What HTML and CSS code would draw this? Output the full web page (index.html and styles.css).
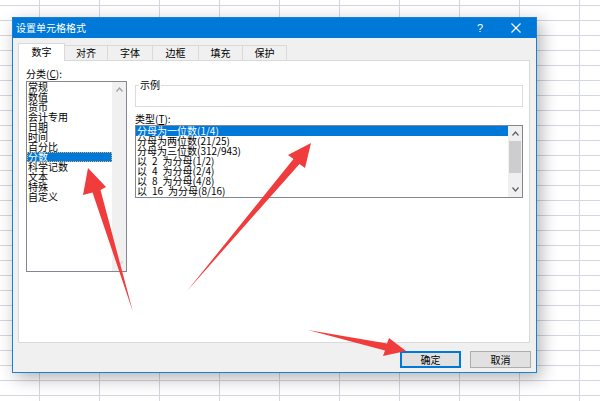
FILE: index.html
```html
<!DOCTYPE html>
<html lang="zh-CN">
<head>
<meta charset="utf-8">
<title>设置单元格格式</title>
<link rel="stylesheet" href="styles.css">
</head>
<body>
<div class="sheet">
  <div class="dialog">
    <div class="titlebar">
      <span class="title">设置单元格格式</span>
      <span class="help">?</span>
      <svg class="close" width="10" height="10" viewBox="0 0 10 10"><path d="M0.5 0.5L9.5 9.5M9.5 0.5L0.5 9.5" stroke="#fff" stroke-width="1.1" fill="none"/></svg>
    </div>
    <div class="body">
      <div class="tabs">
        <div class="tab active w1">数字</div>
        <div class="tab w2">对齐</div>
        <div class="tab w3">字体</div>
        <div class="tab w4">边框</div>
        <div class="tab w5">填充</div>
        <div class="tab w6">保护</div>
      </div>
      <div class="panel">
        <div class="col-left">
          <div class="label">分类(<u>C</u>):</div>
          <div class="listbox cat">
            <ul class="items">
              <li>常规</li>
              <li>数值</li>
              <li>货币</li>
              <li>会计专用</li>
              <li>日期</li>
              <li>时间</li>
              <li>百分比</li>
              <li class="sel focus">分数</li>
              <li>科学记数</li>
              <li>文本</li>
              <li>特殊</li>
              <li>自定义</li>
            </ul>
            <div class="vscroll">
              <div class="arrow-btn"><svg width="7" height="5" viewBox="0 0 7 5"><polyline points="0.5,4.5 3.5,1 6.5,4.5" fill="none" stroke="#a0a0a0" stroke-width="1.2"/></svg></div>
              <div class="track"></div>
              <div class="arrow-btn"><svg width="7" height="5" viewBox="0 0 7 5"><polyline points="0.5,0.5 3.5,4 6.5,0.5" fill="none" stroke="#cfcfcf" stroke-width="1.2"/></svg></div>
            </div>
          </div>
        </div>
        <div class="col-right">
          <fieldset class="sample">
            <legend>示例</legend>
            <div class="sample-body"></div>
          </fieldset>
          <div class="label type-label">类型(<u>T</u>):</div>
          <div class="listbox types">
            <ul class="items">
              <li class="sel">分母为一位数(1/4)</li>
              <li>分母为两位数(21/25)</li>
              <li>分母为三位数(312/943)</li>
              <li>以&ensp;2&ensp;为分母(1/2)</li>
              <li>以&ensp;4&ensp;为分母(2/4)</li>
              <li>以&ensp;8&ensp;为分母(4/8)</li>
              <li>以&ensp;16&ensp;为分母(8/16)</li>
            </ul>
            <div class="vscroll">
              <div class="arrow-btn"><svg width="7" height="5" viewBox="0 0 7 5"><polyline points="0.5,4.5 3.5,1 6.5,4.5" fill="none" stroke="#606060" stroke-width="1.2"/></svg></div>
              <div class="track"><div class="thumb"></div></div>
              <div class="arrow-btn"><svg width="7" height="5" viewBox="0 0 7 5"><polyline points="0.5,0.5 3.5,4 6.5,0.5" fill="none" stroke="#606060" stroke-width="1.2"/></svg></div>
            </div>
          </div>
        </div>
      </div>
      <div class="buttons">
        <button class="btn default">确定</button>
        <button class="btn">取消</button>
      </div>
    </div>
  </div>
  <svg class="arrows" width="600" height="401" viewBox="0 0 600 401">
    <polygon points="88,168 106,187 100.5,190 133,312 92.5,192.5 83,195" fill="#f03c3c"/>
    <polygon points="311,143 305,168 299.5,164 187,291 293.5,159 288,155" fill="#f03c3c"/>
    <polygon points="406,351 383,356 385,350.5 308,330 387,343.5 389,338" fill="#f03c3c"/>
  </svg>
</div>
</body>
</html>
```

FILE: styles.css
```css
html, body {
  margin: 0;
  padding: 0;
  background: #fff;
}

body {
  font-family: "Noto Sans CJK SC", "Noto Sans", sans-serif;
  color: #000;
}

.sheet {
  position: relative;
  width: 600px;
  height: 401px;
  overflow: hidden;
  background-color: #fff;
  background-image:
    linear-gradient(to right, #d3d6e0 1px, transparent 1px),
    linear-gradient(to bottom, #d3d6e0 1px, transparent 1px);
  background-size: 60px 15px;
  background-position: 39px 5px;
}

.dialog {
  position: absolute;
  left: 12px;
  top: 17px;
  width: 525px;
  height: 356px;
  box-sizing: border-box;
  border: 1px solid #1a80d6;
  background: #f0f0f0;
  display: flex;
  flex-direction: column;
  box-shadow: 4px 5px 16px rgba(0, 0, 0, 0.3);
}

.titlebar {
  height: 20px;
  flex: none;
  background: #0078d7;
  color: #fff;
  display: flex;
  align-items: center;
  padding: 0 15px 0 3px;
  font-size: 10px;
  line-height: 12px;
}

.help {
  margin-left: auto;
  width: 8px;
  text-align: center;
  font-family: "Liberation Sans", sans-serif;
  font-size: 11px;
}

.close {
  margin-left: 27px;
  display: block;
}

.body {
  flex: 1;
  display: flex;
  flex-direction: column;
  padding: 5px 6px 4px 5px;
}

.tabs {
  display: flex;
  align-items: flex-end;
  height: 17px;
  flex: none;
  position: relative;
  z-index: 1;
}

.tab {
  height: 15px;
  box-sizing: border-box;
  border: 1px solid #d9d9d9;
  border-bottom: none;
  margin-left: -1px;
  background: #f0f0f0;
  font-size: 10px;
  line-height: 14px;
  text-align: center;
}

.tab.w1 { width: 47px; margin-left: 0; }
.tab.w2 { width: 44px; }
.tab.w3 { width: 46px; }
.tab.w4 { width: 47px; }
.tab.w5 { width: 45px; }
.tab.w6 { width: 45px; }

.tab.active {
  height: 18px;
  margin-bottom: -1px;
  background: #fff;
  line-height: 16px;
}

.panel {
  height: 283px;
  flex: none;
  box-sizing: border-box;
  border: 1px solid #d9d9d9;
  background: #fff;
  padding: 6px 6px 0 7px;
  display: grid;
  grid-template-columns: 101px 388px;
  column-gap: 8px;
  align-items: start;
}

.label {
  font-size: 10px;
  line-height: 14px;
  height: 14px;
  white-space: nowrap;
}

.listbox {
  box-sizing: border-box;
  border: 1px solid #828790;
  background: #fff;
  display: flex;
}

.listbox.cat {
  height: 191px;
}

.listbox.types {
  height: 73px;
}

.items {
  list-style: none;
  margin: 0;
  padding: 0;
  flex: 1;
  min-width: 0;
}

.items li {
  height: 10px;
  font-size: 10px;
  line-height: 10px;
  padding-left: 1px;
  white-space: nowrap;
}

.items li.sel {
  background: #0078d7;
  color: #fff;
}

.items li.focus {
  outline: 1px dotted #e8b060;
  outline-offset: -1px;
}

.vscroll {
  width: 14px;
  flex: none;
  background: #f0f0f0;
  display: flex;
  flex-direction: column;
}

.arrow-btn {
  height: 15px;
  flex: none;
  display: flex;
  align-items: center;
  justify-content: center;
}

.arrow-btn svg {
  display: block;
}

.track {
  flex: 1;
  padding: 0 1px;
}

.thumb {
  height: 32px;
  background: #cdcdcd;
}

.col-right {
  margin-top: 13px;
}

.sample {
  margin: 0;
  padding: 0;
  min-width: 0;
  border: 1px solid #dcdcdc;
}

.sample legend {
  font-size: 10px;
  line-height: 10px;
  padding: 0 1px;
  margin-left: 3px;
}

.sample-body {
  height: 16px;
}

.type-label {
  margin-top: 6px;
  height: 12px;
  line-height: 12px;
}

.buttons {
  margin-top: 8px;
  margin-right: -1px;
  display: flex;
  justify-content: flex-end;
  gap: 9px;
}

.btn {
  width: 61px;
  height: 17px;
  box-sizing: border-box;
  padding: 0;
  border: 1px solid #adadad;
  background: #e1e1e1;
  font-family: "Noto Sans CJK SC", sans-serif;
  font-size: 10px;
  line-height: 14px;
  color: #000;
}

.btn.default {
  border-color: #0078d7;
  box-shadow: inset 0 0 0 1px #0078d7;
}

.arrows {
  position: absolute;
  left: 0;
  top: 0;
  pointer-events: none;
}
```
